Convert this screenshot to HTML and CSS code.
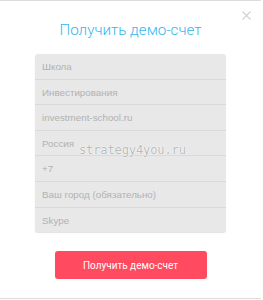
FILE: index.html
```html
<!DOCTYPE html>
<html lang="ru">
<head>
<meta charset="utf-8">
<link rel="stylesheet" href="styles.css">
</head>
<body>
<div class="modal">
  <span class="close" aria-label="close">
    <svg width="9" height="9" viewBox="0 0 9 9"><path d="M0.5 0.5 L8.5 8.5 M8.5 0.5 L0.5 8.5" stroke="#d2d2d2" stroke-width="1.1" fill="none"/></svg>
  </span>
  <h1 class="title">Получить демо-счет</h1>
  <div class="form">
    <div class="field">Школа</div>
    <div class="field">Инвестирования</div>
    <div class="field">investment-school.ru</div>
    <div class="field">Россия</div>
    <div class="field">+7</div>
    <div class="field">Ваш город (обязательно)</div>
    <div class="field">Skype</div>
  </div>
  <div class="actions">
    <button class="btn">Получить демо-счет</button>
  </div>
  <div class="watermark">strategy4you.ru</div>
</div>
</body>
</html>
```
FILE: styles.css
```css
html, body {
  margin: 0;
  padding: 0;
  background: #fff;
}
.modal {
  position: relative;
  width: 261px;
  height: 297px;
  border-top: 1px solid #dcdcdc;
  border-bottom: 1px solid #dcdcdc;
  box-sizing: content-box;
  display: flex;
  flex-direction: column;
  align-items: center;
  font-family: Roboto, "Liberation Sans", sans-serif;
}
.close {
  position: absolute;
  top: 10px;
  right: 10px;
  width: 9px;
  height: 9px;
  line-height: 0;
}
.title {
  margin: 18px 0 0;
  height: 22px;
  font-size: 15.2px;
  line-height: 22px;
  font-weight: 300;
  color: #35b6ec;
}
.form {
  margin-top: 13px;
  width: 191px;
  background: #e8e8e8;
  border-radius: 3px;
  box-shadow: 0 1px 1px rgba(0,0,0,0.12);
  display: flex;
  flex-direction: column;
}
.field {
  height: 24.6px;
  line-height: 25.6px;
  padding-left: 7px;
  font-family: "Liberation Sans", Arial, sans-serif;
  font-size: 9.8px;
  color: #b2b2b2;
  border-top: 1px solid #dadada;
}
.field:first-child {
  border-top: none;
}
.actions {
  margin-top: 19px;
}
.btn {
  width: 152px;
  height: 28px;
  border: none;
  border-radius: 3px;
  background: #ff4a5f;
  color: #fff;
  font-family: Roboto, "Liberation Sans", sans-serif;
  font-size: 10px;
  padding: 0;
}
.watermark {
  position: absolute;
  left: 79px;
  top: 142px;
  font-family: "DejaVu Sans Mono", monospace;
  font-size: 12px;
  letter-spacing: -0.1px;
  color: #bababa;
  text-shadow: 0 0 1px #fff, 0 0 1px #fff, 0 0 1px #fff;
}
```
